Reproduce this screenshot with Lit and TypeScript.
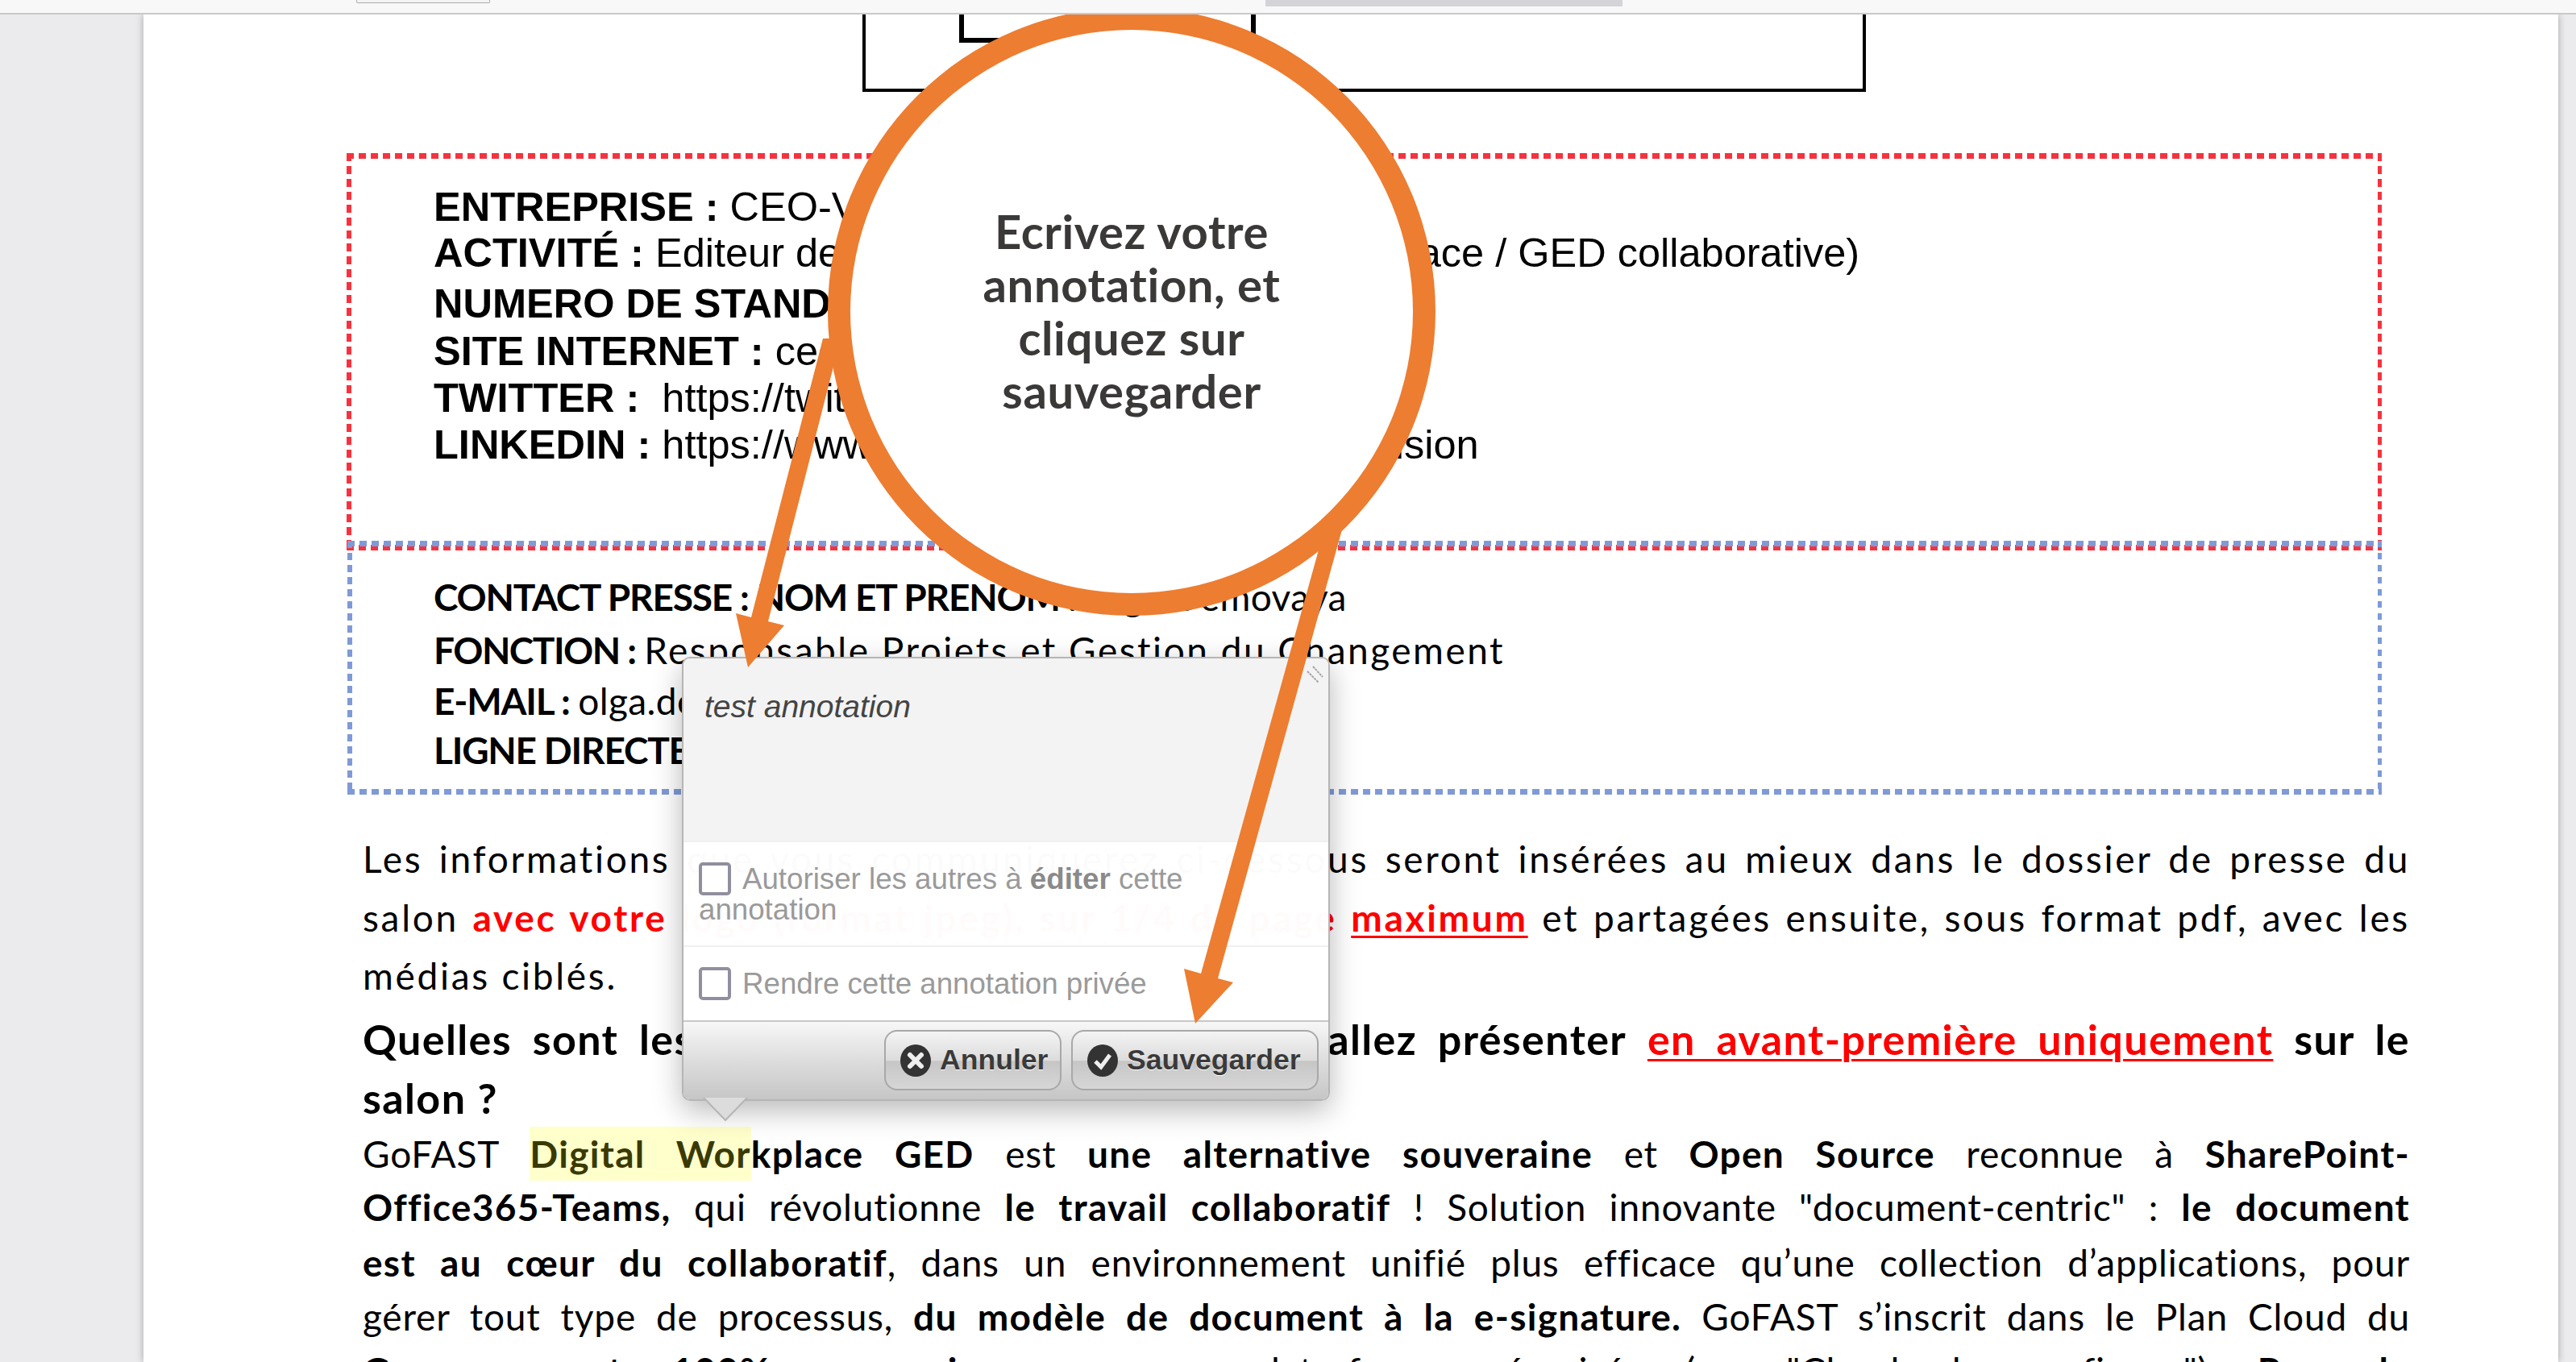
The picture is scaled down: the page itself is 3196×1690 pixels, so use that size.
import { LitElement, css, html, svg } from "lit";
import { customElement } from "lit/decorators.js";

type Line = { y: number; cls?: string; content: unknown };

// baselines are read off the reference, each margin is the delta to the previous line
const ROW_H = 60;

const RED_LINES: Line[] = [
	{ y: 274, content: html`<b>ENTREPRISE :</b> CEO-Vision` },
	{ y: 331, content: html`<b>ACTIVITÉ :</b> Editeur de logiciel GoFAST (Digital Workplace / GED collaborative)` },
	{ y: 394, content: html`<b>NUMERO DE STAND :</b> A definir` },
	{ y: 453, content: html`<b>SITE INTERNET :</b> ceo-vision.com` },
	{ y: 511, content: html`<b>TWITTER :</b>&nbsp; https://twitter.com/ceovision` },
	{ y: 569, content: html`<b>LINKEDIN :</b> https://www.linkedin.com/company/ceo-vision` }
];

const BLUE_LINES: Line[] = [
	{ y: 757, content: html`<b>CONTACT PRESSE : NOM ET PRENOM :</b> <span class="airy">Olga Demovaya</span>` },
	{ y: 823, content: html`<b class="tight">FONCTION :</b> <span class="wide">Responsable Projets et Gestion du Changement</span>` },
	{ y: 886, content: html`<b>E-MAIL :</b> <span class="airy">olga.demovaya@ceo-vision.com</span>` },
	{ y: 947, content: html`<b>LIGNE DIRECTE :</b> 01 00 00 00 00` }
];

const BODY_LINES: Line[] = [
	{ y: 1082, cls: "stretched", content: html`Les informations que vous communiquerez ci-dessous seront insérées au mieux dans le dossier de presse du` },
	{
		y: 1155,
		cls: "stretched",
		content: html`salon <b class="red">avec votre logo (format jpeg), sur 1/4 de page</b> <b class="red link">maximum</b> et partagées ensuite, sous format pdf, avec les`
	},
	{ y: 1227, cls: "stretched left", content: html`médias ciblés.` },
	{
		y: 1305,
		cls: "title",
		content: html`<b>Quelles sont les nouvelles solutions que vous allez présenter</b> <b class="red link">en avant-première uniquement</b> <b>sur le</b>`
	},
	{ y: 1378, cls: "title left", content: html`<b>salon ?</b>` },
	{
		y: 1448,
		content: html`GoFAST <b><mark>Digital Wor</mark>kplace GED</b> est <b>une alternative souveraine</b> et <b>Open Source</b> reconnue à <b>SharePoint-</b>`
	},
	{
		y: 1514,
		content: html`<b>Office365-Teams,</b> qui révolutionne <b>le travail collaboratif</b> ! Solution innovante "document-centric" : <b>le document</b>`
	},
	{
		y: 1583,
		content: html`<b>est au cœur du collaboratif</b>, dans un environnement unifié plus efficace qu’une collection d’applications, pour`
	},
	{
		y: 1650,
		content: html`gérer tout type de processus, <b>du modèle de document à la e-signature.</b> GoFAST s’inscrit dans le Plan Cloud du`
	},
	{
		y: 1717,
		content: html`<b>Gouvernement</b>, <b>100% souverain</b>, pour une plate-forme sécurisée (sur "Cloud de confiance"). <b>Pour le</b>`
	}
];

function renderLines(lines: Line[]) {
	return lines.map((line, i) => {
		const gap = i === 0 ? 0 : line.y - lines[i - 1].y - ROW_H;
		return html`<div class="line ${line.cls ?? ""}" style=${`margin-top:${gap}px`}>${line.content}</div>`;
	});
}

@customElement("app-root")
export class AppRoot extends LitElement {
	static styles = css`
		:host {
			display: block;
			position: relative;
			width: 3196px;
			height: 1690px;
			overflow: hidden;
			background: #ebebed;
			font-family: "Liberation Sans", Arial, sans-serif;
			color: #000;
		}
		.toolbar {
			position: relative;
			z-index: 2;
			height: 16px;
			background: #f8f8f8;
			border-bottom: 2px solid #c9c9c9;
		}
		.tool-btn {
			position: absolute;
			left: 442px;
			top: 0;
			width: 164px;
			height: 3px;
			background: #f4f4f4;
			border: 1px solid #aaa;
			border-top: 0;
			border-radius: 0 0 2px 2px;
		}
		.tool-tab {
			position: absolute;
			left: 1570px;
			top: 0;
			width: 443px;
			height: 8px;
			background: #d4d3d8;
		}
		.page {
			margin-left: 178px;
			width: 2996px;
			height: 1672px;
			background: #fff;
			box-shadow: 0 0 9px rgba(0, 0, 0, 0.3);
			overflow: hidden;
		}
		.frame {
			box-sizing: border-box;
			margin-left: 892px;
			width: 1245px;
			height: 96px;
			border: 4px solid #000;
			border-top: 0;
		}
		.frame-inner {
			box-sizing: border-box;
			margin-left: 116px;
			width: 368px;
			height: 35px;
			border: 6px solid #000;
			border-top: 0;
		}
		.box {
			box-sizing: border-box;
		}
		.red-box {
			margin: 76px 0 0 252px;
			width: 2525px;
			height: 493px;
			padding: 37px 0 0 108px;
			font-size: 50.5px;
			background:
				repeating-linear-gradient(90deg, #f5333f 0 9px, transparent 9px 15px) top / 100% 7px no-repeat,
				repeating-linear-gradient(90deg, #f5333f 0 9px, transparent 9px 15px) bottom / 100% 7px no-repeat,
				repeating-linear-gradient(180deg, #f5333f 0 10px, transparent 10px 16px) left / 6px 100% no-repeat,
				repeating-linear-gradient(180deg, #f5333f 0 10px, transparent 10px 16px) right / 5px 100% no-repeat;
		}
		.red-box .line {
			line-height: 60px;
			height: 60px;
			white-space: nowrap;
		}
		.blue-box {
			margin: -12px 0 0 253px;
			width: 2524px;
			height: 315px;
			padding: 40px 0 0 107px;
			font: 46px Lato, sans-serif;
			background:
				repeating-linear-gradient(90deg, #7f9ad6 0 9px, transparent 9px 15px) top / 100% 7px no-repeat,
				repeating-linear-gradient(90deg, #7f9ad6 0 9px, transparent 9px 15px) bottom / 100% 7px no-repeat,
				repeating-linear-gradient(180deg, #7f9ad6 0 9px, transparent 9px 15px) left / 6px 100% no-repeat,
				repeating-linear-gradient(180deg, #7f9ad6 0 8px, transparent 8px 15px) right / 5px 100% no-repeat;
		}
		.blue-box .line {
			line-height: 60px;
			height: 60px;
			white-space: nowrap;
			letter-spacing: -1.2px;
		}
		.blue-box .tight {
			letter-spacing: -1.5px;
		}
		.blue-box .wide {
			letter-spacing: 2.5px;
		}
		.blue-box .airy {
			letter-spacing: 0.4px;
		}
		.body-text {
			margin: 50px 0 0 272px;
			width: 2540px;
			font: 46px Lato, sans-serif;
		}
		.body-text .line {
			line-height: 60px;
			height: 60px;
			text-align: justify;
			text-align-last: justify;
			letter-spacing: 0.8px;
		}
		.body-text .line b {
			letter-spacing: 1.3px;
		}
		.body-text .stretched,
		.body-text .stretched b {
			letter-spacing: 2.7px;
		}
		.body-text .title {
			font-size: 52px;
		}
		.body-text .title b {
			letter-spacing: 1.4px;
		}
		.body-text .left {
			text-align-last: left;
		}
		.red {
			color: #f00;
		}
		.link {
			text-decoration: underline;
			text-decoration-thickness: 3px;
			text-underline-offset: 5px;
		}
		mark {
			background: #ffffcc;
			color: #3a3a00;
			padding: 6px 0 6px;
		}
		.popup {
			position: absolute;
			left: 846px;
			top: 815px;
			width: 804px;
			height: 551px;
			box-sizing: border-box;
			display: flex;
			flex-direction: column;
			border: 2px solid #b5b5b5;
			border-radius: 10px;
			box-shadow: 0 12px 36px rgba(0, 0, 0, 0.28);
			background: rgba(255, 255, 255, 0.6);
			font-size: 36.7px;
		}
		.note {
			height: 226px;
			padding: 38px 0 0 26px;
			background: #f3f3f3;
			border-radius: 8px 8px 0 0;
			font-style: italic;
			font-size: 39px;
			color: #444;
			box-sizing: border-box;
		}
		.opt {
			box-sizing: border-box;
			padding-left: 19px;
			background: rgba(255, 255, 255, 0.96);
			border-top: 2px solid #f0f0f0;
			color: #9a9a9a;
			line-height: 36px;
		}
		.opt b {
			color: #8a8a8a;
		}
		.opt-share {
			height: 130px;
			padding-top: 25px;
			padding-right: 60px;
		}
		.opt-private {
			height: 93px;
			padding-top: 25px;
		}
		.check {
			display: inline-block;
			box-sizing: border-box;
			width: 40px;
			height: 41px;
			margin-right: 14px;
			vertical-align: -8px;
			background: #fff;
			border: 4px solid #8f8f9f;
			border-radius: 5px;
		}
		.footer {
			flex: 1;
			display: flex;
			justify-content: flex-end;
			gap: 12px;
			padding: 10px 12px 0 0;
			box-sizing: border-box;
			border-top: 2px solid #c8c8c8;
			border-radius: 0 0 8px 8px;
			background: linear-gradient(#f7f7f7, #dddddd 50%, #c6c6c6);
		}
		.btn {
			box-sizing: border-box;
			display: flex;
			align-items: center;
			gap: 11px;
			height: 75px;
			padding-left: 18px;
			border: 2px solid #a8a8a8;
			border-radius: 16px;
			background: linear-gradient(#f4f4f4, #dcdcdc 50%, #c6c6c6 52%, #d6d6d6);
			font-size: 35.6px;
			font-weight: 700;
			color: #3a3a3a;
			text-shadow: 0 1px 0 #fff;
		}
		.btn-cancel {
			width: 220px;
		}
		.btn-save {
			width: 307px;
		}
		.btn svg {
			width: 38px;
			height: 40px;
			flex: none;
		}
		.grip {
			position: absolute;
			right: 6px;
			top: 8px;
			width: 22px;
			height: 24px;
		}
		.tail {
			position: absolute;
			left: 24px;
			top: calc(100% - 2px);
			width: 56px;
			height: 30px;
		}
		.overlay {
			position: absolute;
			inset: 0;
			width: 3196px;
			height: 1690px;
		}
		.bubble {
			position: absolute;
			left: 1027px;
			top: 9px;
			width: 754px;
			height: 755px;
			box-sizing: border-box;
			border: 28px solid #ed7d31;
			border-radius: 50%;
			background: #fff;
			display: flex;
			flex-direction: column;
			align-items: center;
			justify-content: center;
			padding-bottom: 2px;
			font: 700 58px/66px Lato, sans-serif;
			letter-spacing: 0.6px;
			color: #3b3838;
		}
	`;

	private arrows() {
		return svg`
			<polygon fill="#ed7d31" points="1021,420 1043,420 953,771 973,776 928,828 913,761 932,766" />
			<polygon fill="#ed7d31" points="1645,650 1667,650 1511,1214 1530,1219 1483,1270 1469,1202 1490,1208" />
		`;
	}

	render() {
		return html`
			<div class="toolbar">
				<div class="tool-btn"></div>
				<div class="tool-tab"></div>
			</div>
			<div class="page">
				<div class="frame"><div class="frame-inner"></div></div>
				<div class="box red-box">${renderLines(RED_LINES)}</div>
				<div class="box blue-box">${renderLines(BLUE_LINES)}</div>
				<div class="body-text">${renderLines(BODY_LINES)}</div>
			</div>

			<div class="popup">
				<div class="note">test annotation</div>
				<div class="opt opt-share">
					<span class="check"></span>Autoriser les autres à <b>éditer</b> cette annotation
				</div>
				<div class="opt opt-private"><span class="check"></span>Rendre cette annotation privée</div>
				<div class="footer">
					<div class="btn btn-cancel">
						<svg viewBox="0 0 38 40">
							<ellipse cx="19" cy="20" rx="19" ry="20" fill="#333" />
							<path d="M12 13 L26 27 M26 13 L12 27" stroke="#eee" stroke-width="6" stroke-linecap="round" />
						</svg>
						Annuler
					</div>
					<div class="btn btn-save">
						<svg viewBox="0 0 38 40">
							<ellipse cx="19" cy="20" rx="19" ry="20" fill="#333" />
							<path d="M10 21 L17 28 L28 13" fill="none" stroke="#eee" stroke-width="5" />
						</svg>
						Sauvegarder
					</div>
				</div>
				<svg class="grip" viewBox="0 0 22 24">
					<path d="M2 8 L16 22 M9 2 L21 15" stroke="#a5a5a5" stroke-width="2" stroke-dasharray="3 1" />
				</svg>
				<svg class="tail" viewBox="0 0 56 30">
					<polygon points="1,0 55,0 28,28" fill="#dcdcdc" />
					<path d="M1 0 L28 28 L55 0" fill="none" stroke="#b5b5b5" stroke-width="2" />
				</svg>
			</div>

			<svg class="overlay" viewBox="0 0 3196 1690">${this.arrows()}</svg>
			<div class="bubble">
				<span>Ecrivez votre</span>
				<span>annotation, et</span>
				<span>cliquez sur</span>
				<span>sauvegarder</span>
			</div>
		`;
	}
}
